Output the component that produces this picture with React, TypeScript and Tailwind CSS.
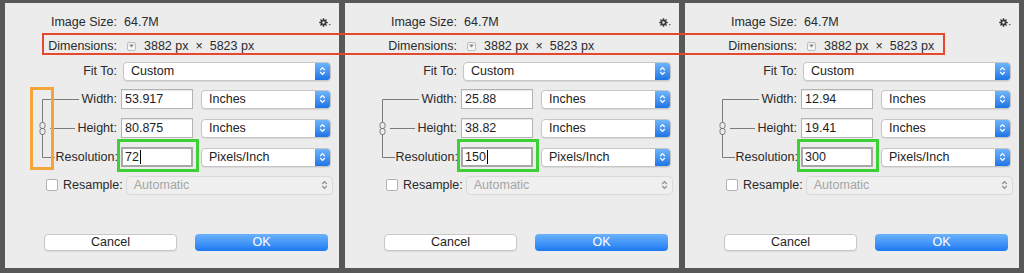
import React from 'react';

interface PanelData {
  width: string;
  height: string;
  res: string;
  caret?: boolean;
  orange?: boolean;
}

const panels: PanelData[] = [
  { width: '53.917', height: '80.875', res: '72', caret: true, orange: true },
  { width: '25.88', height: '38.82', res: '150', caret: true },
  { width: '12.94', height: '19.41', res: '300' },
];

const Stepper: React.FC<{ disabled?: boolean }> = ({ disabled }) => (
  <div
    className={
      disabled
        ? 'flex h-full w-[15px] items-center justify-center'
        : 'flex h-full w-[15px] items-center justify-center rounded-r-[3px] bg-linear-to-b from-[#6db4fb] to-[#1c74e6]'
    }
  >
    <svg width="7" height="10" viewBox="0 0 7 10">
      <path
        d="M1.2 4 L3.5 1.6 L5.8 4 M1.2 6 L3.5 8.4 L5.8 6"
        fill="none"
        stroke={disabled ? '#8c8c8c' : '#ffffff'}
        strokeWidth="1.2"
      />
    </svg>
  </div>
);

const Select: React.FC<{ value: string; className: string; disabled?: boolean }> = ({
  value,
  className,
  disabled,
}) => (
  <div
    className={`flex h-[19px] items-stretch rounded-[4px] border ${
      disabled
        ? 'border-[#dadada] bg-[#efefef] text-[#a5a5a5]'
        : 'border-[#c6c6c6] bg-white text-[#222] shadow-[0_1px_1px_rgba(0,0,0,0.08)]'
    } ${className}`}
  >
    <span className="flex flex-1 items-center pl-[7px]">{value}</span>
    <Stepper disabled={disabled} />
  </div>
);

const Field: React.FC<{ value: string; focused?: boolean; caret?: boolean }> = ({
  value,
  focused,
  caret,
}) => (
  <div
    className={`flex h-[20px] w-[72px] items-center bg-white text-[#1e1e1e] ${
      focused
        ? 'border-2 border-[#a8a8a8] pl-[2px]'
        : 'border border-[#b4b4b4] pl-[3px] shadow-[inset_0_1px_1px_rgba(0,0,0,0.1)]'
    }`}
  >
    {value}
    {caret && <span className="ml-px h-[14px] w-px bg-black" />}
  </div>
);

const Gear = () => (
  <svg width="12" height="9" viewBox="0 0 12 9">
    <g fill="#3c3c3c">
      <circle cx="4.5" cy="4.5" r="3" />
      <rect x="3.8" y="0.2" width="1.4" height="8.6" />
      <rect x="0.2" y="3.8" width="8.6" height="1.4" />
      <rect x="3.8" y="0.2" width="1.4" height="8.6" transform="rotate(45 4.5 4.5)" />
      <rect x="3.8" y="0.2" width="1.4" height="8.6" transform="rotate(-45 4.5 4.5)" />
    </g>
    <circle cx="4.5" cy="4.5" r="1.2" fill="#ececec" />
    <path d="M9.6 6.2 L11.8 6.2 L10.7 7.6 Z" fill="#3c3c3c" />
  </svg>
);

const Panel: React.FC<{ data: PanelData }> = ({ data }) => (
  <div className="relative flex h-[265px] w-[334px] shrink-0 flex-col bg-[#ececec] text-[12.5px] text-[#2a2a2a]">
    {/* Image size */}
    <div className="mt-[9px] flex h-[20px] items-center pr-[8px]">
      <span className="w-[112px] text-right">Image Size:</span>
      <span className="ml-[7px] flex-1">64.7M</span>
      <Gear />
    </div>

    {/* Dimensions */}
    <div className="mt-[4px] flex h-[20px] items-center">
      <span className="w-[112px] text-right">Dimensions:</span>
      <span className="ml-[10px] flex h-[9px] w-[9px] items-center justify-center rounded-[2px] border border-[#bcbcbc] bg-[#f6f6f6]">
        <svg width="5" height="4" viewBox="0 0 5 4">
          <path d="M0 0.5 L5 0.5 L2.5 3.5 Z" fill="#8a8a8a" />
        </svg>
      </span>
      <span className="ml-[8px] whitespace-pre">3882 px  ×  5823 px</span>
    </div>

    {/* Fit to */}
    <div className="mt-[5px] flex h-[20px] items-center">
      <span className="w-[112px] text-right">Fit To:</span>
      <Select value="Custom" className="ml-[6px] w-[208px]" />
    </div>

    {/* Width */}
    <div className="mt-[8px] flex h-[20px] items-center">
      <span className="w-[112px] text-right">Width:</span>
      <div className="ml-[4px]">
        <Field value={data.width} />
      </div>
      <Select value="Inches" className="ml-[8px] w-[130px]" />
    </div>

    {/* Height */}
    <div className="mt-[9px] flex h-[20px] items-center">
      <span className="w-[112px] text-right">Height:</span>
      <div className="ml-[4px]">
        <Field value={data.height} />
      </div>
      <Select value="Inches" className="ml-[8px] w-[130px]" />
    </div>

    {/* Resolution */}
    <div className="mt-[9px] flex h-[20px] items-center">
      <span className="w-[113px] text-right">Resolution:</span>
      <div className="relative ml-[3px]">
        <Field value={data.res} focused caret={data.caret} />
        <span className="pointer-events-none absolute -top-[8px] -right-[6px] -bottom-[5px] -left-[4px] border-[3px] border-[#3dd136]" />
      </div>
      <Select value="Pixels/Inch" className="ml-[8px] w-[130px]" />
    </div>

    {/* Resample */}
    <div className="mt-[8px] flex h-[20px] items-center">
      <span className="ml-[41px] h-[12px] w-[12px] rounded-[2px] border border-[#b2b2b2] bg-white" />
      <span className="ml-[5px]">Resample:</span>
      <Select value="Automatic" disabled className="ml-[3px] w-[207px]" />
    </div>

    {/* Buttons */}
    <div className="mt-[39px] flex h-[17px] items-stretch pl-[39px]">
      <div className="flex w-[133px] items-center justify-center rounded-[4px] border border-[#c8c8c8] bg-white text-[#222] shadow-[0_1px_1px_rgba(0,0,0,0.08)]">
        Cancel
      </div>
      <div className="ml-[18px] flex w-[133px] items-center justify-center rounded-[4px] bg-linear-to-b from-[#6ab2fc] to-[#1a79f2] text-white">
        OK
      </div>
    </div>

    {/* constrain bracket */}
    <svg className="pointer-events-none absolute top-0 left-0" width="80" height="160">
      <g stroke="#7c7c7c" strokeWidth="1" fill="none">
        <path d="M37.5 96.5 H74 M37.5 96.5 V119 M37.5 132 V154.5 H50" />
        <path d="M45 125.5 H70" />
        <rect x="35" y="119.5" width="5" height="6" rx="2" />
        <rect x="35" y="125.5" width="5" height="6" rx="2" />
      </g>
    </svg>

    {data.orange && (
      <span className="pointer-events-none absolute top-[84px] left-[25px] h-[83px] w-[24px] border-[3px] border-[#f4a53a]" />
    )}
  </div>
);

const App: React.FC = () => {
  return (
    <div className="relative flex h-[273px] w-[1024px] gap-[6px] overflow-hidden bg-[#585858] pt-[3px] pl-[5px] font-['Liberation_Sans',Arial,sans-serif]">
      {panels.map((p, i) => (
        <Panel key={i} data={p} />
      ))}
      {/* Dimensions highlight */}
      <span className="pointer-events-none absolute top-[33px] left-[42px] h-[22px] w-[903px] border-2 border-[#e5482e]" />
    </div>
  );
};

export default App;
